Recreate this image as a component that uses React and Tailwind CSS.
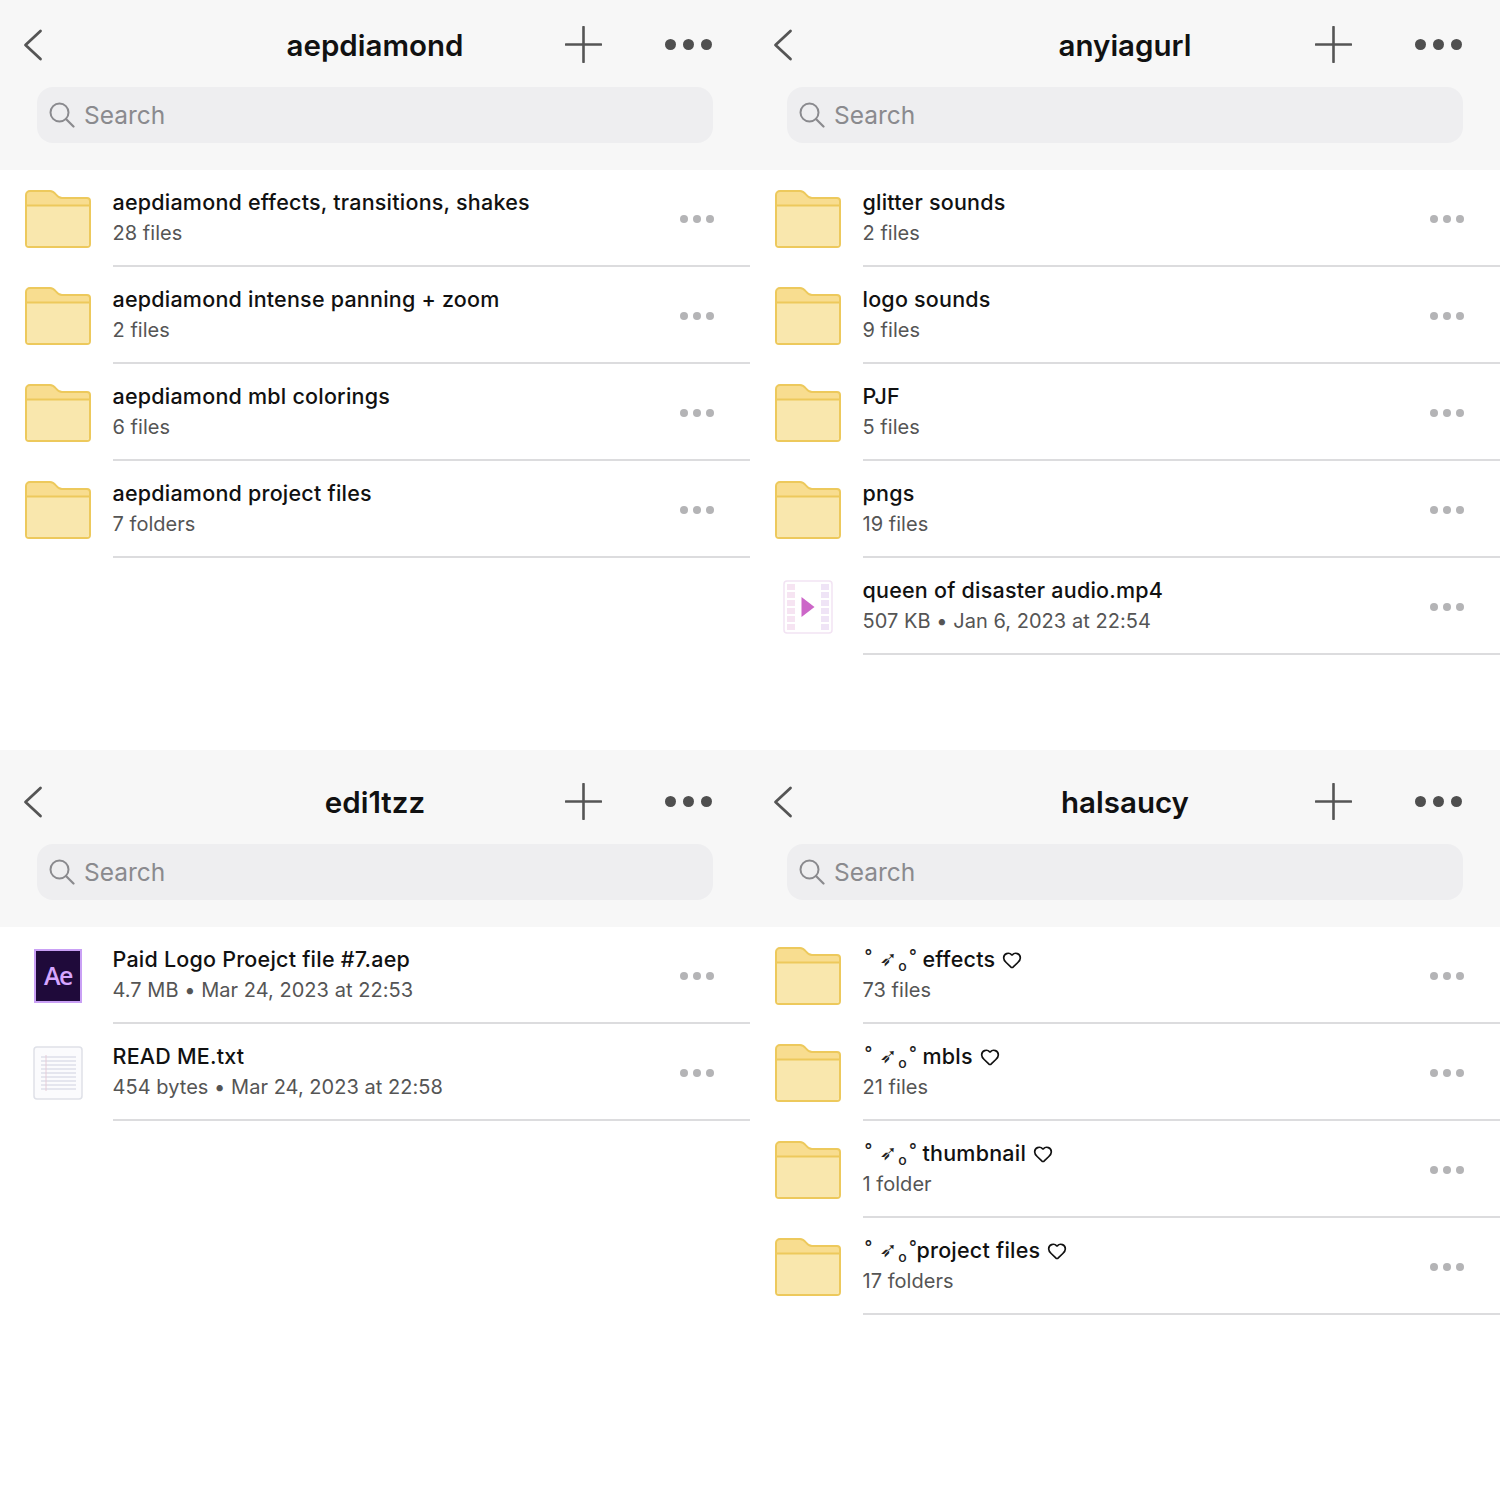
import { Heart } from "lucide-react";

const panels = [
  {
    title: "aepdiamond",
    headerClass: "h-[170px]",
    rows: [
      { name: "aepdiamond effects, transitions, shakes", meta: "28 files" },
      { name: "aepdiamond intense panning + zoom", meta: "2 files" },
      { name: "aepdiamond mbl colorings", meta: "6 files" },
      { name: "aepdiamond project files", meta: "7 folders" },
    ],
  },
  {
    title: "anyiagurl",
    headerClass: "h-[170px]",
    rows: [
      { name: "glitter sounds", meta: "2 files" },
      { name: "logo sounds", meta: "9 files" },
      { name: "PJF", meta: "5 files" },
      { name: "pngs", meta: "19 files" },
      { name: "queen of disaster audio.mp4", meta: "507 KB • Jan 6, 2023 at 22:54", icon: "video" },
    ],
  },
  {
    title: "edi1tzz",
    headerClass: "h-[177px]",
    rows: [
      { name: "Paid Logo Proejct file #7.aep", meta: "4.7 MB • Mar 24, 2023 at 22:53", icon: "ae" },
      { name: "READ ME.txt", meta: "454 bytes • Mar 24, 2023 at 22:58", icon: "doc" },
    ],
  },
  {
    title: "halsaucy",
    headerClass: "h-[177px]",
    rows: [
      { prefix: true, name: "effects", meta: "73 files" },
      { prefix: true, name: "mbls", meta: "21 files" },
      { prefix: true, name: "thumbnail", meta: "1 folder" },
      { prefix: true, tight: true, name: "project files", meta: "17 folders" },
    ],
  },
];

function FolderIcon() {
  return (
    <svg width="66" height="58" viewBox="0 0 66 58" fill="none">
      <path
        d="M1 15V5a4 4 0 0 1 4-4h20c3 0 4 1 6 3.500S34 8 37 8h25a3 3 0 0 1 3 3v4z"
        fill="#f8dd90"
      />
      <path
        d="M1 5a4 4 0 0 1 4-4h20c3 0 4 1 6 3.500S34 8 37 8h25a3 3 0 0 1 3 3v43a3 3 0 0 1-3 3H4a3 3 0 0 1-3-3z"
        stroke="#edc95c"
        strokeWidth="2"
      />
      <path d="M2 16h62v38a2 2 0 0 1-2 2H4a2 2 0 0 1-2-2z" fill="#f9e7ad" />
      <path d="M1 15.500h64" stroke="#edc95c" strokeWidth="2" />
    </svg>
  );
}

function VideoIcon() {
  const cells = [4, 12, 20, 28, 36, 44];
  return (
    <svg width="50" height="54" viewBox="0 0 50 54" fill="none">
      <rect x="1" y="1" width="48" height="52" rx="3" fill="#fff" stroke="#f2e3f3" strokeWidth="1.500" />
      {cells.map((y) => (
        <g key={y}>
          <rect x="4" y={y} width="8" height="6" fill="#f6e4f2" />
          <rect x="38" y={y} width="8" height="6" fill="#efe4f6" />
        </g>
      ))}
      <path d="M18.500 17l13 10-13 10z" fill="#cc66c8" />
    </svg>
  );
}

function DocIcon() {
  const lines = [11, 15, 19, 23, 27, 31, 35, 39, 43];
  return (
    <svg width="50" height="54" viewBox="0 0 50 54" fill="none">
      <rect x="1" y="1" width="48" height="52" rx="3" fill="#fbfbfd" stroke="#dfe1e8" strokeWidth="1.500" />
      {lines.map((y) => (
        <path key={y} d={`M8 ${y}h35`} stroke="#cfd1e0" />
      ))}
      <path d="M13 9v36" stroke="#e6ccd8" />
    </svg>
  );
}

function AeIcon() {
  return (
    <div className="w-[48px] h-[54px] bg-[#1f0a3a] border-2 border-[#c9a0f5] flex items-center justify-center text-[#d6a6ff] text-[25px] font-semibold tracking-[-1.500px] font-['Open_Sans',sans-serif]">
      Ae
    </div>
  );
}

function RowIcon({ icon }) {
  if (icon === "video") return <VideoIcon />;
  if (icon === "doc") return <DocIcon />;
  if (icon === "ae") return <AeIcon />;
  return <FolderIcon />;
}

function BackIcon() {
  return (
    <svg width="20" height="32" viewBox="0 0 20 32" fill="none">
      <path d="M17.500 2L2.500 16l15 14" stroke="#555" strokeWidth="2.800" strokeLinecap="round" strokeLinejoin="round" />
    </svg>
  );
}

function PlusIcon() {
  return (
    <svg width="37" height="37" viewBox="0 0 37 37" fill="none">
      <path d="M18.500 1v35M1 18.500h35" stroke="#555" strokeWidth="2.600" strokeLinecap="round" />
    </svg>
  );
}

function SearchIcon() {
  return (
    <svg width="26" height="26" viewBox="0 0 26 26" fill="none">
      <circle cx="10.500" cy="10.500" r="9" stroke="#8a8a8e" strokeWidth="2" />
      <path d="M17 17l7.500 7.500" stroke="#8a8a8e" strokeWidth="2.200" strokeLinecap="round" />
    </svg>
  );
}

function Dots({ className, dotClass }) {
  return (
    <div className={`flex items-center ${className}`}>
      <span className={`rounded-full ${dotClass}`}></span>
      <span className={`rounded-full ${dotClass}`}></span>
      <span className={`rounded-full ${dotClass}`}></span>
    </div>
  );
}

// the little "° ➶ o °" decoration in front of the folder names
function Sparkle({ tight }) {
  return (
    <span className={`shrink-0 whitespace-pre text-[#222] ${tight ? "w-[54px]" : "w-[60px]"}`}>
      <span className="text-[17px] font-medium align-[5px] ml-[2px]">°</span>
      <span className="text-[21px] font-['DejaVu_Sans',sans-serif] align-[1px] ml-[7px]">➶</span>
      <span className="text-[14px] font-medium align-[-4px] ml-[1px]">o</span>
      <span className="text-[17px] font-medium align-[5px] ml-[2px]">°</span>
    </span>
  );
}

function Row({ row }) {
  return (
    <div className="h-[97px] flex">
      <div className="w-[112.500px] shrink-0 pl-[25px]">
        <div className="w-[66px] h-full flex items-center justify-center">
          <RowIcon icon={row.icon} />
        </div>
      </div>
      <div className="flex-1 flex items-center justify-between border-b-2 border-[#dcdcde] pr-[36px]">
        <div>
          <div className="flex items-center h-[31px] text-[21.500px] font-[450] tracking-[0.22px] text-[#111]">
            {row.prefix && <Sparkle tight={row.tight} />}
            <span>{row.name}</span>
            {row.prefix && <Heart className="ml-[7px] mt-[1px]" size={20} strokeWidth={2} />}
          </div>
          <div className="h-[31px] leading-[31px] text-[20px] tracking-[0.04px] text-[#555]">{row.meta}</div>
        </div>
        <Dots className="gap-[5px] mt-[3px]" dotClass="w-[8px] h-[8px] bg-[#b4b4b6]" />
      </div>
    </div>
  );
}

function Panel({ panel }) {
  return (
    <div className="bg-white h-[750px]">
      <div className={`bg-[#f7f7f7] flex flex-col justify-end pb-[27px] ${panel.headerClass}`}>
        <div className="grid grid-cols-[1fr_auto_1fr] items-center h-[50px] mb-[17px]">
          <div className="pl-[23px]">
            <BackIcon />
          </div>
          <div className="text-[29.500px] font-semibold text-[#111]">{panel.title}</div>
          <div className="flex items-center justify-end pr-[38px] gap-[63px] pb-[1px]">
            <PlusIcon />
            <Dots className="gap-[7px]" dotClass="w-[11px] h-[11px] bg-[#4f4f4f]" />
          </div>
        </div>
        <div className="mx-[37px] h-[56px] rounded-[16px] bg-[#eeeef0] flex items-center pl-[12px] gap-[9px]">
          <SearchIcon />
          <span className="text-[24.500px] text-[#8a8a8e]">Search</span>
        </div>
      </div>
      {panel.rows.map((row, idx) => (
        <Row key={idx} row={row} />
      ))}
    </div>
  );
}

export default function App() {
  return (
    <div className="w-[1500px] h-[1500px] bg-white grid grid-cols-2 overflow-hidden font-['Inter',sans-serif]">
      {panels.map((panel) => (
        <Panel key={panel.title} panel={panel} />
      ))}
    </div>
  );
}
